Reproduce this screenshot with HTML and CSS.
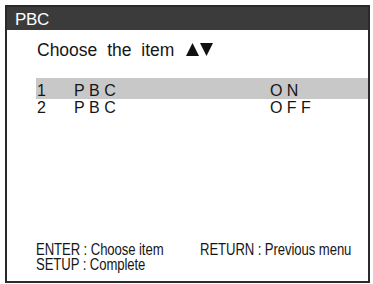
FILE: index.html
```html
<!DOCTYPE html>
<html>
<head>
<meta charset="utf-8">
<link rel="stylesheet" href="styles.css">
</head>
<body>
<div class="screen">
  <div class="header">PBC</div>
  <div class="title">
    <span>Choose the item</span>
    <svg class="arrows" width="27" height="13" viewBox="0 0 27 13"><polygon points="0,13 6.5,0 13,13" fill="#111"/><polygon points="14,0 27,0 20.5,13" fill="#111"/></svg>
  </div>
  <div class="list">
    <div class="row selected"><span>1</span><span class="spaced">PBC</span><span class="spaced">ON</span></div>
    <div class="row"><span>2</span><span class="spaced">PBC</span><span class="spaced">OFF</span></div>
  </div>
  <div class="footer">
    <div class="cell"><span class="narrow">ENTER : Choose item</span></div>
    <div class="cell"><span class="narrow">RETURN : Previous menu</span></div>
    <div class="cell"><span class="narrow">SETUP : Complete</span></div>
    <div class="cell"></div>
  </div>
</div>
</body>
</html>
```
FILE: styles.css
```css
html, body {
  margin: 0;
  padding: 0;
  background: #fff;
}
body {
  font-family: "Liberation Sans", Arial, sans-serif;
  color: #161616;
}
.screen {
  margin: 5px 0 0 5px;
  width: 365px;
  height: 278px;
  box-sizing: border-box;
  border: 2px solid #2a2a2a;
  display: flex;
  flex-direction: column;
}
.header {
  height: 23px;
  box-sizing: border-box;
  padding: 2px 0 0 8px;
  background: #3b3b3b;
  color: #fff;
  font-size: 17px;
  line-height: 21px;
  letter-spacing: -0.4px;
}
.title {
  margin: 10px 0 0 30px;
  font-size: 17.5px;
  line-height: 20px;
  word-spacing: 5px;
  display: flex;
  align-items: flex-start;
}
.arrows {
  margin: 3px 0 0 12px;
}
.list {
  margin: 18px 0 0 29px;
  font-size: 16px;
  line-height: 17px;
}
.row {
  display: grid;
  grid-template-columns: 37px 196px auto;
  padding-left: 1px;
}
.row.selected {
  background: #c8c8c8;
  padding-top: 4px;
}
.spaced {
  letter-spacing: 4.4px;
}
.footer {
  margin-top: auto;
  padding: 0 0 9px 29px;
  display: grid;
  grid-template-columns: 164px 150px;
  font-size: 16px;
  line-height: 15px;
}
.cell {
  height: 15px;
  white-space: nowrap;
}
.narrow {
  display: inline-block;
  transform: scaleX(0.82);
  transform-origin: 0 0;
  letter-spacing: -0.1px;
}
```
